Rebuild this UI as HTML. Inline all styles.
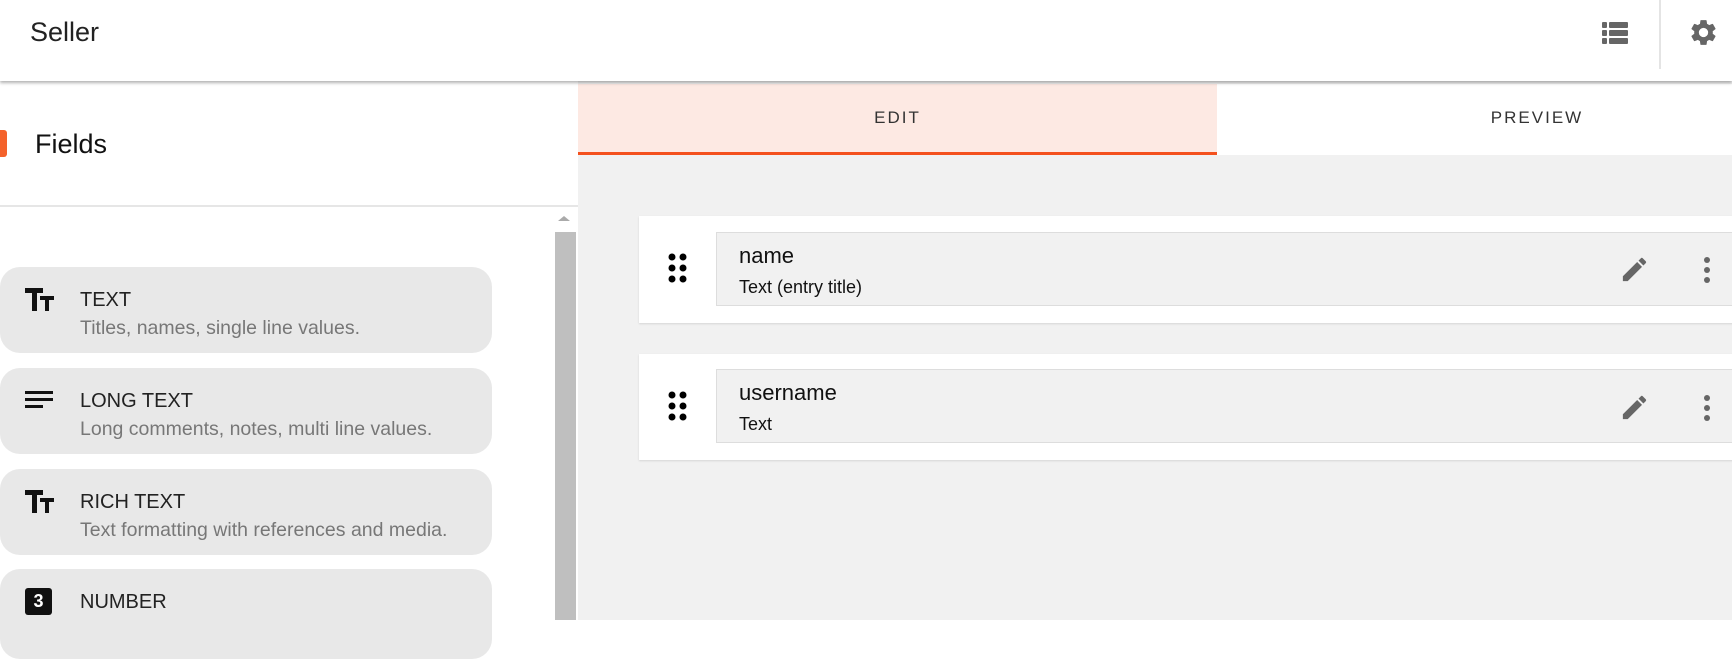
<!DOCTYPE html>
<html><head><style>
*{margin:0;padding:0;box-sizing:border-box}
body{width:1732px;height:620px;overflow:hidden;background:#fff;font-family:"Liberation Sans",sans-serif;position:relative}
.abs{position:absolute}
.hdr{left:0;top:0;width:1732px;height:81px;background:#fff;box-shadow:0 2px 3px rgba(0,0,0,.3);z-index:5}
.card{position:absolute;left:0;width:492px;height:86px;background:#e8e8e8;border-radius:20px}
.card .t{position:absolute;left:80px;top:22px;font-size:20px;color:#222}
.card .d{position:absolute;left:80px;top:50px;font-size:19.5px;color:#777}
.card .ic{position:absolute;left:25px;top:21px}
.tab{top:84px;height:71px;font-size:17px;letter-spacing:2px;color:#333;text-align:center;line-height:68px}
.fc{left:639px;width:1100px;background:#fff;box-shadow:0 1px 2px rgba(0,0,0,.12)}
.in{left:716px;width:1020px;background:#f1f1f1;border:1px solid #ddd;border-right:none}
.nm{position:absolute;left:22px;top:10px;font-size:22px;color:#111}
.sb{position:absolute;left:22px;top:44px;font-size:18px;color:#111}
</style></head><body>
<div class="abs hdr">
 <div class="abs" style="left:30px;top:17px;font-size:27px;color:#222">Seller</div>
 <svg class="abs" style="left:1602px;top:22px" width="26" height="22" viewBox="0 0 26 22" fill="#666"><rect x="0" y="0" width="5" height="6" rx="1"/><rect x="7" y="0" width="19" height="6" rx="1"/><rect x="0" y="8" width="5" height="6" rx="1"/><rect x="7" y="8" width="19" height="6" rx="1"/><rect x="0" y="16" width="5" height="6" rx="1"/><rect x="7" y="16" width="19" height="6" rx="1"/></svg>
 <div class="abs" style="left:1659px;top:0;width:2px;height:69px;background:#e4e4e4"></div>
 <svg class="abs" style="left:1688px;top:17px" width="31" height="31" viewBox="0 0 24 24" fill="#666"><path d="M19.14 12.94c.04-.3.06-.61.06-.94 0-.32-.02-.64-.07-.94l2.03-1.58a.49.49 0 0 0 .12-.61l-1.92-3.320a.49.49 0 0 0-.59-.22l-2.39.96c-.5-.38-1.03-.7-1.620-.94l-.36-2.54a.48.48 0 0 0-.48-.41h-3.84c-.24 0-.43.17-.47.41l-.36 2.54c-.59.24-1.130.57-1.620.94l-2.39-.96a.48.48 0 0 0-.59.22L2.74 8.87c-.12.21-.08.47.12.61l2.03 1.58c-.05.3-.09.63-.09.94s.02.64.07.94l-2.03 1.58a.49.49 0 0 0-.12.61l1.92 3.32c.12.22.37.29.59.22l2.39-.96c.5.38 1.03.7 1.62.94l.36 2.54c.05.24.24.41.48.41h3.84c.24 0 .44-.17.47-.41l.36-2.54c.59-.24 1.13-.56 1.62-.94l2.39.96c.22.08.47 0 .59-.22l1.92-3.32c.12-.22.07-.47-.12-.61l-2.01-1.58zM12 15.6A3.6 3.6 0 1 1 12 8.4a3.6 3.6 0 0 1 0 7.2z"/></svg>
</div>
<!-- left -->
<div class="abs" style="left:0;top:130px;width:7px;height:27px;background:#f4622b;border-radius:0 3px 3px 0"></div>
<div class="abs" style="left:35px;top:129px;font-size:27px;color:#111">Fields</div>
<div class="abs" style="left:0;top:205px;width:578px;height:2px;background:#e6e6e6"></div>
<div class="abs" style="left:558px;top:216px;width:0;height:0;border-left:6px solid transparent;border-right:6px solid transparent;border-bottom:5px solid #aaa"></div>
<div class="abs" style="left:555px;top:232px;width:21px;height:388px;background:#bfbfbf"></div>
<div class="card" style="top:267px"><svg class="ic" width="29" height="23" viewBox="0 0 29 23"><path d="M0 0h18v5h-6v18h-5V5H0z M15 8h14v4h-5v11h-4V12h-5z" fill="#111"/></svg><div class="t">TEXT</div><div class="d">Titles, names, single line values.</div></div>
<div class="card" style="top:368px"><svg class="ic" width="28" height="20" viewBox="0 0 28 20" style="top:23px"><rect y="0" width="28" height="3" fill="#111"/><rect y="7" width="28" height="3" fill="#111"/><rect y="14" width="18" height="3" fill="#111"/></svg><div class="t">LONG TEXT</div><div class="d">Long comments, notes, multi line values.</div></div>
<div class="card" style="top:469px"><svg class="ic" width="29" height="23" viewBox="0 0 29 23"><path d="M0 0h18v5h-6v18h-5V5H0z M15 8h14v4h-5v11h-4V12h-5z" fill="#111"/></svg><div class="t">RICH TEXT</div><div class="d">Text formatting with references and media.</div></div>
<div class="card" style="top:569px;height:90px"><div class="ic" style="top:19px;width:27px;height:27px;background:#111;border-radius:3px;color:#fff;font-weight:bold;font-size:18px;text-align:center;line-height:27px">3</div><div class="t">NUMBER</div></div>
<!-- right -->
<div class="abs" style="left:578px;top:81px;width:1154px;height:539px;background:#f1f1f1"></div>
<div class="abs tab" style="left:578px;width:639px;background:#fde9e3;border-bottom:3px solid #f4511e">EDIT</div>
<div class="abs tab" style="left:1217px;width:640px;background:#fff">PREVIEW</div>
<div class="abs fc" style="top:216px;height:107px"></div>
<div class="abs in" style="top:232px;height:74px"><div class="nm">name</div><div class="sb">Text (entry title)</div></div>
<div class="abs fc" style="top:354px;height:106px"></div>
<div class="abs in" style="top:369px;height:74px"><div class="nm">username</div><div class="sb">Text</div></div>
<svg class="abs" style="left:668px;top:253px" width="20" height="32" viewBox="0 0 20 32" fill="#000"><circle cx="4" cy="4" r="3.5"/><circle cx="15" cy="4" r="3.5"/><circle cx="4" cy="15" r="3.5"/><circle cx="15" cy="15" r="3.5"/><circle cx="4" cy="26" r="3.5"/><circle cx="15" cy="26" r="3.5"/></svg>
<svg class="abs" style="left:668px;top:391px" width="20" height="32" viewBox="0 0 20 32" fill="#000"><circle cx="4" cy="4" r="3.5"/><circle cx="15" cy="4" r="3.5"/><circle cx="4" cy="15" r="3.5"/><circle cx="15" cy="15" r="3.5"/><circle cx="4" cy="26" r="3.5"/><circle cx="15" cy="26" r="3.5"/></svg>
<svg class="abs" style="left:1619px;top:254px" width="31" height="31" viewBox="0 0 24 24" fill="#666"><path d="M3 17.25V21h3.75L17.81 9.94l-3.75-3.75L3 17.25zM20.71 7.04a1 1 0 0 0 0-1.41l-2.34-2.34a1 1 0 0 0-1.41 0l-1.830 1.83 3.75 3.75 1.83-1.83z"/></svg>
<svg class="abs" style="left:1619px;top:392px" width="31" height="31" viewBox="0 0 24 24" fill="#666"><path d="M3 17.25V21h3.75L17.81 9.94l-3.75-3.75L3 17.25zM20.71 7.04a1 1 0 0 0 0-1.41l-2.34-2.34a1 1 0 0 0-1.41 0l-1.830 1.83 3.75 3.75 1.83-1.83z"/></svg>
<svg class="abs" style="left:1703px;top:256px" width="8" height="28" viewBox="0 0 8 28" fill="#666"><circle cx="4" cy="4" r="3"/><circle cx="4" cy="14" r="3"/><circle cx="4" cy="24" r="3"/></svg>
<svg class="abs" style="left:1703px;top:394px" width="8" height="28" viewBox="0 0 8 28" fill="#666"><circle cx="4" cy="4" r="3"/><circle cx="4" cy="14" r="3"/><circle cx="4" cy="24" r="3"/></svg>
</body></html>
